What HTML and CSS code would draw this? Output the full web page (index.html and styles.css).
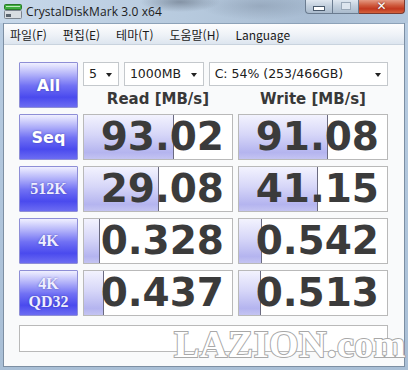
FILE: index.html
```html
<!DOCTYPE html>
<html lang="ko">
<head>
    <meta charset="UTF-8">
    <title>CrystalDiskMark 3.0 x64</title>
    <link rel="stylesheet" href="styles.css">
</head>
<body>
    <div class="window">
        <div class="titlebar">
            <svg class="app-icon" width="18" height="15" viewBox="0 0 18 15">
                <rect x="0.5" y="0.5" width="17" height="5" rx="1" fill="#3fae3f" stroke="#2a7a2a"/>
                <line x1="2" y1="2.5" x2="16" y2="2.5" stroke="#bfeabf" stroke-width="1"/>
                <rect x="0.5" y="6.5" width="17" height="8" rx="1" fill="#d8dde2" stroke="#7c8590"/>
                <rect x="2" y="10" width="5" height="3" fill="#5a6470"/>
            </svg>
            <span class="title">CrystalDiskMark 3.0 x64</span>
            <div class="caption">
                <span class="cap-btn min"></span>
                <span class="cap-btn max"></span>
                <span class="cap-btn close">&#x2715;</span>
            </div>
        </div>

        <div class="frame">
            <div class="menubar">
                <span>파일(F)</span>
                <span>편집(E)</span>
                <span>테마(T)</span>
                <span>도움말(H)</span>
                <span>Language</span>
            </div>

            <div class="client">
                <div class="grid">
                    <div class="test big">All</div>
                    <div class="controls">
                        <div class="selects">
                            <div class="select s-count">5</div>
                            <div class="select s-size">1000MB</div>
                            <div class="select s-drive">C: 54% (253/466GB)</div>
                        </div>
                        <div class="heads">
                            <span>Read [MB/s]</span>
                            <span>Write [MB/s]</span>
                        </div>
                    </div>

                    <div class="test big">Seq</div>
                    <div class="cell"><div class="bar" style="width:89px"></div><span class="value">93.02</span></div>
                    <div class="cell"><div class="bar" style="width:88px"></div><span class="value">91.08</span></div>

                    <div class="test serif">512K</div>
                    <div class="cell"><div class="bar" style="width:74px"></div><span class="value">29.08</span></div>
                    <div class="cell"><div class="bar" style="width:78px"></div><span class="value">41.15</span></div>

                    <div class="test serif">4K</div>
                    <div class="cell"><div class="bar" style="width:15px"></div><span class="value">0.328</span></div>
                    <div class="cell"><div class="bar" style="width:22px"></div><span class="value">0.542</span></div>

                    <div class="test serif two">4K<br>QD32</div>
                    <div class="cell"><div class="bar" style="width:19px"></div><span class="value">0.437</span></div>
                    <div class="cell"><div class="bar" style="width:21px"></div><span class="value">0.513</span></div>
                </div>

                <div class="status"></div>
                <div class="watermark">LAZION.com</div>
            </div>
        </div>
    </div>
</body>
</html>
```

FILE: styles.css
```css
body {
    margin: 0;
    width: 408px;
    height: 370px;
    overflow: hidden;
    font-family: "DejaVu Sans", sans-serif;
}
.window {
    width: 408px;
    height: 370px;
    display: flex;
    flex-direction: column;
    background: linear-gradient(#b9cde2, #a9bfd6);
}
.titlebar {
    height: 23px;
    display: flex;
    align-items: center;
    position: relative;
    background:
        radial-gradient(ellipse 40px 10px at 180px 2px, rgba(70, 80, 95, 0.45), transparent),
        radial-gradient(ellipse 60px 14px at 260px 6px, rgba(110, 125, 145, 0.35), transparent),
        linear-gradient(90deg, #c7d8ea, #b7cade 45%, #a9bdd3 75%, #b3c7dc);
}
.app-icon {
    margin-left: 4px;
}
.title {
    margin-left: 4px;
    font-family: "Open Sans", "Noto Sans", sans-serif;
    font-size: 12px;
    color: #1c1c1c;
    letter-spacing: 0.1px;
}
.caption {
    position: absolute;
    top: -1px;
    right: 3px;
    display: flex;
}
.cap-btn {
    height: 15px;
    border: 1px solid #6b7c90;
    border-top: none;
    display: flex;
    align-items: center;
    justify-content: center;
    box-sizing: border-box;
}
.min, .max {
    width: 27px;
    background: linear-gradient(#e4ebf3, #c2cfdd 50%, #aabbcd);
}
.min {
    border-radius: 0 0 0 4px;
    border-right: none;
}
.min::after {
    content: "";
    width: 10px;
    height: 3px;
    margin-top: 4px;
    background: #fff;
    border: 1px solid #4a5a6c;
}
.max::after {
    content: "";
    width: 8px;
    height: 6px;
    border: 1px solid #9aa8b8;
    background: #dde5ee;
}
.close {
    width: 46px;
    border-left: none;
    border-color: #7a3a30;
    border-radius: 0 0 4px 0;
    background: linear-gradient(#e8a590, #cf5b3e 45%, #c2381f 70%, #d5623c);
    color: #fff;
    font-size: 12px;
    font-weight: bold;
    text-shadow: 0 0 2px #5a1a10;
}
.frame {
    flex: 1;
    margin: 0 3px 3px;
    display: flex;
    flex-direction: column;
    border: 1px solid #7d8fa3;
    border-top: none;
}
.menubar {
    height: 22px;
    display: flex;
    align-items: center;
    padding-left: 6px;
    gap: 16px;
    background: linear-gradient(#fdfdfe, #eef2f7 55%, #dde5ef);
    border-top: 1px solid #8da2b8;
    border-bottom: 1px solid #c9d3de;
    box-sizing: border-box;
    font-family: "Noto Sans CJK KR", "Noto Sans", sans-serif;
    font-size: 12px;
    color: #1a1a1a;
}
.client {
    flex: 1;
    position: relative;
    background: #f9fafb;
    padding: 17px 0 0 15px;
}
.grid {
    display: grid;
    grid-template-columns: 59px 150px 150px;
    grid-auto-rows: 46px;
    column-gap: 5px;
    row-gap: 6px;
}
.test {
    border: 1px solid #8e8ed6;
    border-radius: 1px;
    background: linear-gradient(#f0f0ff, #bcbcfa 22%, #7070f4 52%, #4a4aee 78%, #6c6cf2);
    color: #fff;
    display: flex;
    align-items: center;
    justify-content: center;
    text-align: center;
    font-weight: bold;
    text-shadow: 0 0 2px rgba(40, 40, 140, 0.6);
}
.big {
    font-size: 16px;
}
.serif {
    font-family: "Liberation Serif", serif;
    font-size: 16px;
    color: #eeeeff;
}
.two {
    line-height: 18px;
    font-size: 16px;
}
.controls {
    grid-column: 2 / 4;
    display: flex;
    flex-direction: column;
}
.selects {
    display: flex;
    gap: 5px;
    height: 24px;
}
.select {
    position: relative;
    height: 24px;
    box-sizing: border-box;
    border: 1px solid #c4c8cc;
    background: #fff;
    font-size: 12.5px;
    color: #202020;
    line-height: 22px;
    padding-left: 5px;
}
.select::after {
    content: "";
    position: absolute;
    right: 6px;
    top: 10px;
    border-left: 3.5px solid transparent;
    border-right: 3.5px solid transparent;
    border-top: 4px solid #222;
}
.s-count {
    width: 36px;
}
.s-size {
    width: 80px;
}
.s-drive {
    width: 180px;
}
.heads {
    display: grid;
    grid-template-columns: 150px 150px;
    column-gap: 5px;
    margin-top: 4px;
    font-size: 15px;
    font-weight: bold;
    color: #383838;
    text-align: center;
}
.cell {
    position: relative;
    border: 1px solid #b9b9b9;
    background: #fff;
    display: flex;
    align-items: center;
    justify-content: flex-end;
    overflow: hidden;
}
.bar {
    position: absolute;
    left: 0;
    top: 0;
    bottom: 0;
    background: linear-gradient(#f3f3fe, #d6d6f8 45%, #b4b4ef 85%, #c4c4f2);
    border-right: 1px solid #6a6a80;
}
.value {
    position: relative;
    padding-right: 8px;
    font-size: 39px;
    font-weight: bold;
    color: #3b3b3b;
    line-height: 46px;
    margin-top: -1px;
}
.status {
    margin-top: 9px;
    width: 369px;
    height: 27px;
    box-sizing: border-box;
    border: 1px solid #b9b9b9;
    background: #fff;
}
.watermark {
    position: absolute;
    left: 170px;
    bottom: 6px;
    font-family: "Liberation Serif", serif;
    font-size: 38px;
    font-weight: bold;
    line-height: 32px;
    color: #ffffff;
    -webkit-text-stroke: 2px #a8a8a8;
    paint-order: stroke fill;
    letter-spacing: 0.5px;
}
```
